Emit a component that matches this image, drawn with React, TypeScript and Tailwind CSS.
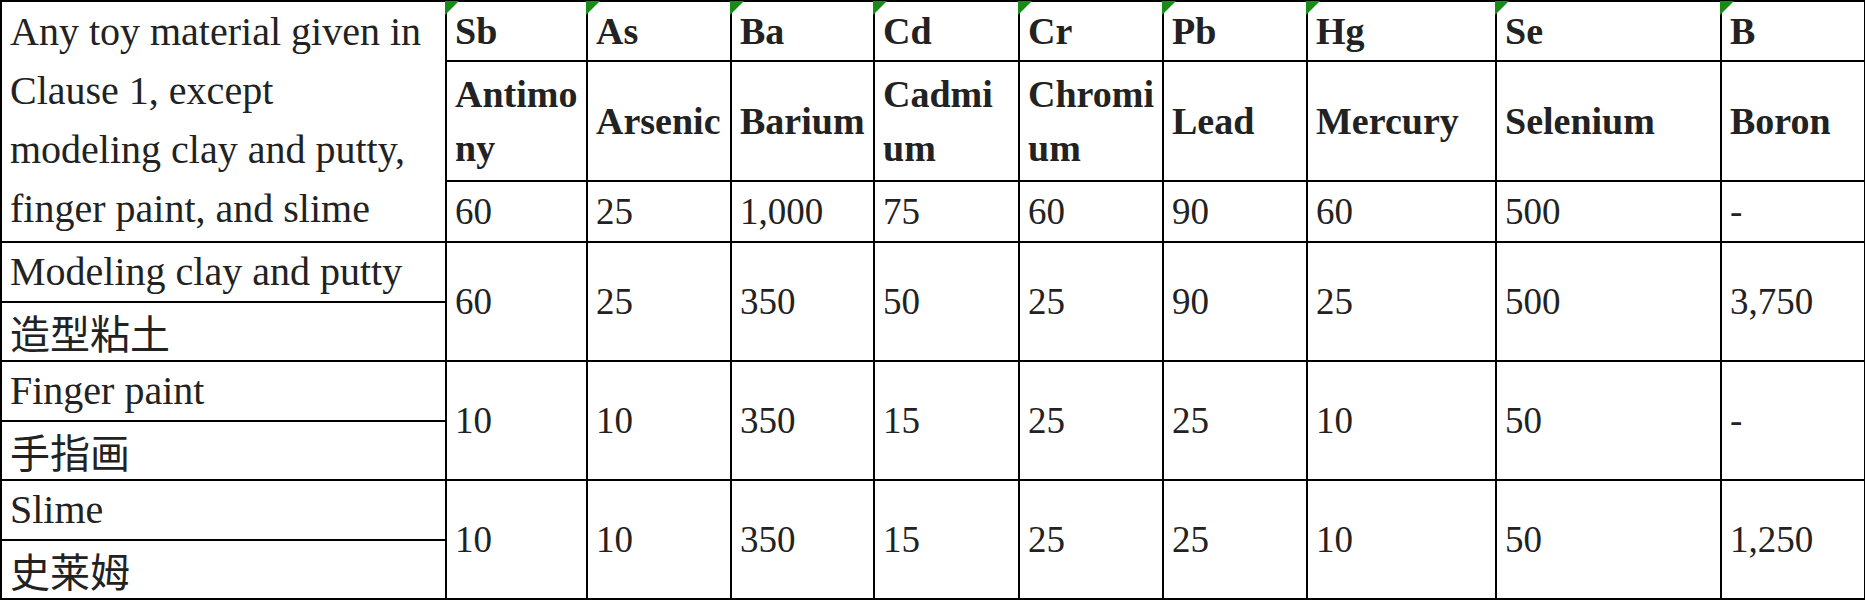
import React from 'react';

const elements = [
    { sym: 'Sb', name: ['Antimo', 'ny'] },
    { sym: 'As', name: ['Arsenic'] },
    { sym: 'Ba', name: ['Barium'] },
    { sym: 'Cd', name: ['Cadmi', 'um'] },
    { sym: 'Cr', name: ['Chromi', 'um'] },
    { sym: 'Pb', name: ['Lead'] },
    { sym: 'Hg', name: ['Mercury'] },
    { sym: 'Se', name: ['Selenium'] },
    { sym: 'B', name: ['Boron'] },
];

const colWidths = [445, 141, 144, 143, 145, 144, 144, 189, 225, 144];

const generalLimits = ['60', '25', '1,000', '75', '60', '90', '60', '500', '-'];

const materials = [
    { en: 'Modeling clay and putty', zh: '造型粘土', values: ['60', '25', '350', '50', '25', '90', '25', '500', '3,750'] },
    { en: 'Finger paint', zh: '手指画', values: ['10', '10', '350', '15', '25', '25', '10', '50', '-'] },
    { en: 'Slime', zh: '史莱姆', values: ['10', '10', '350', '15', '25', '25', '10', '50', '1,250'] },
];

// every cell: 2px black rule, 8px side padding
const cell = 'border-2 border-black px-2 py-0 align-middle leading-[54px]';
const head = `${cell} font-bold text-[38px]`;
const num = `${cell} text-[37px]`;

function Marker() {
    return (
        <svg className="absolute -left-[2px] -top-[1px]" width="14" height="14" viewBox="0 0 14 14">
            <polygon points="0,0 14,0 0,14" fill="#178a17" />
        </svg>
    );
}

export default function App() {
    return (
        <div className="w-[1865px] h-[602px] bg-white overflow-hidden">
            <table
                className="table-fixed border-collapse w-[1865px] text-[40px] text-[#222]"
                style={{ fontFamily: '"Liberation Serif", "Noto Sans CJK SC", serif' }}
            >
                <colgroup>
                    {colWidths.map((w, i) => (
                        <col key={i} style={{ width: w }} />
                    ))}
                </colgroup>
                <tbody>
                    <tr className="h-[60px]">
                        <td rowSpan={3} className="border-2 border-black px-2 py-0 align-top leading-[59px]">
                            Any toy material given in
                            <br />
                            Clause 1, except
                            <br />
                            modeling clay and putty,
                            <br />
                            finger paint, and slime
                        </td>
                        {elements.map((el) => (
                            <td key={el.sym} className={`${head} relative`}>
                                <Marker />
                                {el.sym}
                            </td>
                        ))}
                    </tr>
                    <tr className="h-[120px]">
                        {elements.map((el) => (
                            <td key={el.sym} className={head}>
                                {el.name.map((part, i) => (
                                    <React.Fragment key={i}>
                                        {i > 0 && <br />}
                                        {part}
                                    </React.Fragment>
                                ))}
                            </td>
                        ))}
                    </tr>
                    <tr className="h-[61px]">
                        {generalLimits.map((v, i) => (
                            <td key={i} className={num}>{v}</td>
                        ))}
                    </tr>
                    {materials.map((m) => (
                        <React.Fragment key={m.en}>
                            <tr className="h-[60px]">
                                <td className={cell}>{m.en}</td>
                                {m.values.map((v, i) => (
                                    <td key={i} rowSpan={2} className={num}>{v}</td>
                                ))}
                            </tr>
                            <tr className="h-[59px]">
                                <td className={cell} style={{ fontFamily: '"Noto Sans CJK SC", sans-serif' }}>{m.zh}</td>
                            </tr>
                        </React.Fragment>
                    ))}
                </tbody>
            </table>
        </div>
    );
}
